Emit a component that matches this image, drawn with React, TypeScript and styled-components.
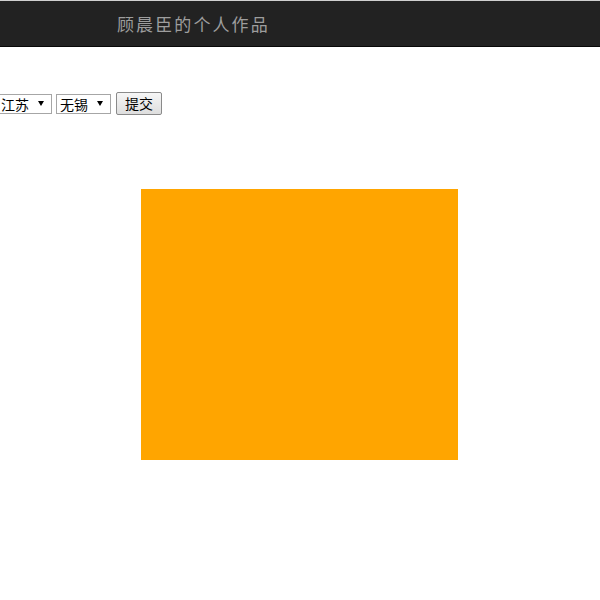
import React from "react";
import styled, { createGlobalStyle } from "styled-components";

const Global = createGlobalStyle`
  html, body { margin: 0; padding: 0; background: #fff; }
  body { font-family: "Noto Sans CJK SC", "Liberation Sans", sans-serif; }
`;

const NavBar = styled.header`
  height: 45px;
  background: #222;
  border-top: 1px solid #d0d0d0;
  border-bottom: 1px solid #080808;
  display: flex;
  align-items: center;
`;

const Brand = styled.span`
  margin-left: 117px;
  color: #9d9d9d;
  font-size: 17px;
  letter-spacing: 2.1px;
  line-height: 45px;
`;

const Form = styled.form`
  display: flex;
  align-items: center;
  gap: 4px;
  margin-top: 45px;
  margin-left: -3px;
  height: 23px;
`;

const SelectWrap = styled.div`
  position: relative;
  display: inline-flex;
  height: 20px;
`;

const Select = styled.select`
  appearance: none;
  -webkit-appearance: none;
  height: 20px;
  padding: 0 22px 0 3px;
  border: 1px solid #a6a6a6;
  border-radius: 0;
  background: #fff;
  color: #000;
  font-family: "Noto Sans CJK SC", "Liberation Sans", sans-serif;
  font-size: 14px;
  line-height: 18px;
  outline: none;
`;

const Arrow = styled.span`
  position: absolute;
  right: 8px;
  top: 7px;
  width: 0;
  height: 0;
  border-left: 3px solid transparent;
  border-right: 3px solid transparent;
  border-top: 5px solid #000;
  pointer-events: none;
`;

const Button = styled.button`
  height: 23px;
  width: 46px;
  margin-left: 1px;
  padding: 0;
  border: 1px solid #8a8a8a;
  border-radius: 2px;
  background: linear-gradient(#f6f6f6, #dedede);
  color: #000;
  font-family: "Noto Sans CJK SC", "Liberation Sans", sans-serif;
  font-size: 14px;
  line-height: 21px;
`;

const Box = styled.div`
  margin-top: 74px;
  margin-left: 141px;
  width: 317px;
  height: 271px;
  background: #ffa500;
`;

export default function App() {
  return (
    <>
      <Global />
      <NavBar>
        <Brand>顾晨臣的个人作品</Brand>
      </NavBar>
      <Form onSubmit={(e) => e.preventDefault()}>
        <SelectWrap>
          <Select defaultValue="江苏">
            <option value="江苏">江苏</option>
            <option value="浙江">浙江</option>
          </Select>
          <Arrow />
        </SelectWrap>
        <SelectWrap>
          <Select defaultValue="无锡">
            <option value="无锡">无锡</option>
            <option value="南京">南京</option>
          </Select>
          <Arrow />
        </SelectWrap>
        <Button type="submit">提交</Button>
      </Form>
      <Box />
    </>
  );
}
